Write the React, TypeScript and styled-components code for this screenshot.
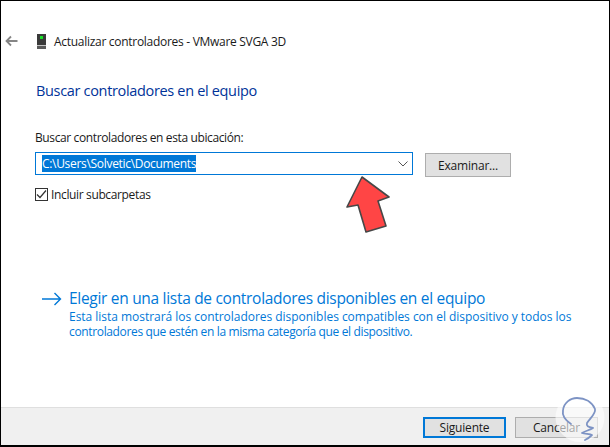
import React, { ReactElement } from 'react';
import styled, { createGlobalStyle } from 'styled-components';

const GlobalStyle = createGlobalStyle`
  html, body {
    margin: 0;
    padding: 0;
    background: #fff;
  }
  * {
    box-sizing: border-box;
  }
`;

function App(): ReactElement {
  return (
    <>
      <GlobalStyle />
      <Window>
        <Content>
          <Header>
            <BackIcon viewBox="0 0 13 12">
              <path d="M12.5 6H1.5M6 1.5L1.5 6L6 10.5" fill="none" stroke="#858585" strokeWidth="1.8" />
            </BackIcon>
            <DeviceIcon viewBox="0 0 9 15">
              <rect x="0" y="0" width="9" height="11" fill="#3a3a3a" />
              <rect x="3" y="2" width="3" height="3" fill="#18e028" />
              <rect x="0" y="11" width="9" height="1" fill="#c4c4c4" />
              <rect x="0" y="12" width="9" height="3" fill="#5a5a5a" />
            </DeviceIcon>
            <WindowTitle>Actualizar controladores - VMware SVGA 3D</WindowTitle>
          </Header>
          <Heading>Buscar controladores en el equipo</Heading>
          <FieldLabel>Buscar controladores en esta ubicación:</FieldLabel>
          <FieldRow>
            <Combo>
              <Selected>C:\Users\Solvetic\Documents</Selected>
              <Chevron viewBox="0 0 10 6">
                <path d="M0.5 0.5L5 5L9.5 0.5" fill="none" stroke="#555" strokeWidth="1" />
              </Chevron>
            </Combo>
            <BrowseButton>Examinar...</BrowseButton>
          </FieldRow>
          <CheckRow>
            <CheckBox>
              <svg width="11" height="11" viewBox="0 0 11 11">
                <path d="M1 5.5L4 8.5L10 1.5" fill="none" stroke="#333" strokeWidth="1.2" />
              </svg>
            </CheckBox>
            <CheckText>Incluir subcarpetas</CheckText>
          </CheckRow>
          <LinkRow>
            <LinkArrow viewBox="0 0 20 14">
              <path d="M0 7H18.5M12.5 1L18.5 7L12.5 13" fill="none" stroke="#0078d7" strokeWidth="1.4" />
            </LinkArrow>
            <LinkBody>
              <LinkTitle>Elegir en una lista de controladores disponibles en el equipo</LinkTitle>
              <LinkText $spacing={-0.03}>
                Esta lista mostrará los controladores disponibles compatibles con el dispositivo y todos los
              </LinkText>
              <LinkText $spacing={-0.35}>controladores que estén en la misma categoría que el dispositivo.</LinkText>
            </LinkBody>
          </LinkRow>
        </Content>
        <Footer>
          <FooterButton $primary>Siguiente</FooterButton>
          <FooterButton>Cancelar</FooterButton>
        </Footer>
        <RedArrow viewBox="0 0 46 60">
          <path
            d="M16 1L43 21L32 25L40 50L20 56L12 29L1 31Z"
            fill="#ff4545"
            stroke="#474747"
            strokeWidth="1.6"
            strokeLinejoin="round"
          />
        </RedArrow>
        <Watermark viewBox="0 0 50 50">
          <circle cx="25" cy="24.5" r="24.5" fill="#fff" fillOpacity="0.6" />
          <path
            d="M16 31C10 27 7 22 8 17C9 10 15 5 22 5C30 5 37 9 40 16C41 21 35 25 32 30C31 33 33 34 38 35C35 37 30 38 27 40C30 41 35 41 37 42C35 44 32 46 30 47"
            fill="none"
            stroke="#7d93c4"
            strokeWidth="1.8"
            strokeLinecap="round"
            strokeLinejoin="round"
          />
        </Watermark>
      </Window>
    </>
  );
}

const Window = styled.div`
  position: relative;
  width: 610px;
  height: 447px;
  display: flex;
  flex-direction: column;
  background: #fff;
  border-style: solid;
  border-color: #000;
  border-width: 1px 1px 2px 1px;
  font-family: 'Open Sans', 'Noto Sans', sans-serif;
  font-size: 12px;
  color: #1a1a1a;
  overflow: hidden;
`;

const Content = styled.div`
  flex: 1;
  display: flex;
  flex-direction: column;
  padding: 31px 0 0 4px;
`;

const Header = styled.div`
  display: flex;
  align-items: center;
  height: 18px;
`;

const BackIcon = styled.svg`
  width: 13px;
  height: 12px;
  margin-right: 19px;
`;

const DeviceIcon = styled.svg`
  width: 9px;
  height: 15px;
  margin-right: 8px;
`;

const WindowTitle = styled.span`
  font-size: 12px;
  letter-spacing: -0.29px;
  white-space: nowrap;
`;

const Heading = styled.h1`
  margin: 31px 0 0 31px;
  font-size: 14.5px;
  font-weight: 400;
  line-height: 20px;
  letter-spacing: -0.33px;
  color: #003399;
`;

const FieldLabel = styled.div`
  margin: 29px 0 0 30px;
  line-height: 16px;
  letter-spacing: -0.38px;
`;

const FieldRow = styled.div`
  display: flex;
  align-items: flex-start;
  margin: 6px 0 0 30px;
`;

const Combo = styled.div`
  width: 378px;
  height: 23px;
  display: flex;
  align-items: center;
  justify-content: space-between;
  padding: 0 4px 0 6px;
  border: 1px solid #0078d7;
`;

const Selected = styled.span`
  background: #0078d7;
  color: #fff;
  line-height: 17px;
  letter-spacing: -0.31px;
`;

const Chevron = styled.svg`
  width: 10px;
  height: 6px;
`;

const BrowseButton = styled.div`
  width: 86px;
  height: 24px;
  margin: 1px 0 0 12px;
  display: flex;
  align-items: center;
  justify-content: center;
  background: #e1e1e1;
  border: 1px solid #adadad;
  letter-spacing: -0.2px;
`;

const CheckRow = styled.div`
  display: flex;
  align-items: center;
  margin: 9px 0 0 30px;
`;

const CheckBox = styled.div`
  width: 13px;
  height: 13px;
  display: flex;
  align-items: center;
  justify-content: center;
  border: 1px solid #333;
  margin-right: 3px;
`;

const CheckText = styled.span`
  letter-spacing: -0.36px;
`;

const LinkRow = styled.div`
  display: flex;
  align-items: flex-start;
  margin: 85px 0 0 37px;
`;

const LinkArrow = styled.svg`
  width: 20px;
  height: 14px;
  margin: 4px 7px 0 0;
`;

const LinkBody = styled.div`
  display: flex;
  flex-direction: column;
  color: #0078d7;
`;

const LinkTitle = styled.div`
  font-size: 15.5px;
  line-height: 21px;
  letter-spacing: -0.3px;
  white-space: nowrap;
`;

const LinkText = styled.div<{ $spacing: number }>`
  font-size: 12px;
  line-height: 15px;
  letter-spacing: ${({ $spacing }) => $spacing}px;
  white-space: nowrap;
`;

const Footer = styled.div`
  height: 38px;
  display: flex;
  justify-content: flex-end;
  align-items: flex-start;
  gap: 9px;
  padding: 9px 11px 0 0;
  background: #f0f0f0;
  border-top: 1px solid #dfdfdf;
`;

const FooterButton = styled.div<{ $primary?: boolean }>`
  width: 83px;
  height: 21px;
  display: flex;
  align-items: center;
  justify-content: center;
  background: #e1e1e1;
  border: ${({ $primary }) => ($primary ? '2px solid #0078d7' : '1px solid #adadad')};
  letter-spacing: -0.2px;
`;

const RedArrow = styled.svg`
  position: absolute;
  left: 345px;
  top: 175px;
  width: 46px;
  height: 60px;
`;

const Watermark = styled.svg`
  position: absolute;
  left: 554px;
  top: 392px;
  width: 50px;
  height: 50px;
`;

export default App;
